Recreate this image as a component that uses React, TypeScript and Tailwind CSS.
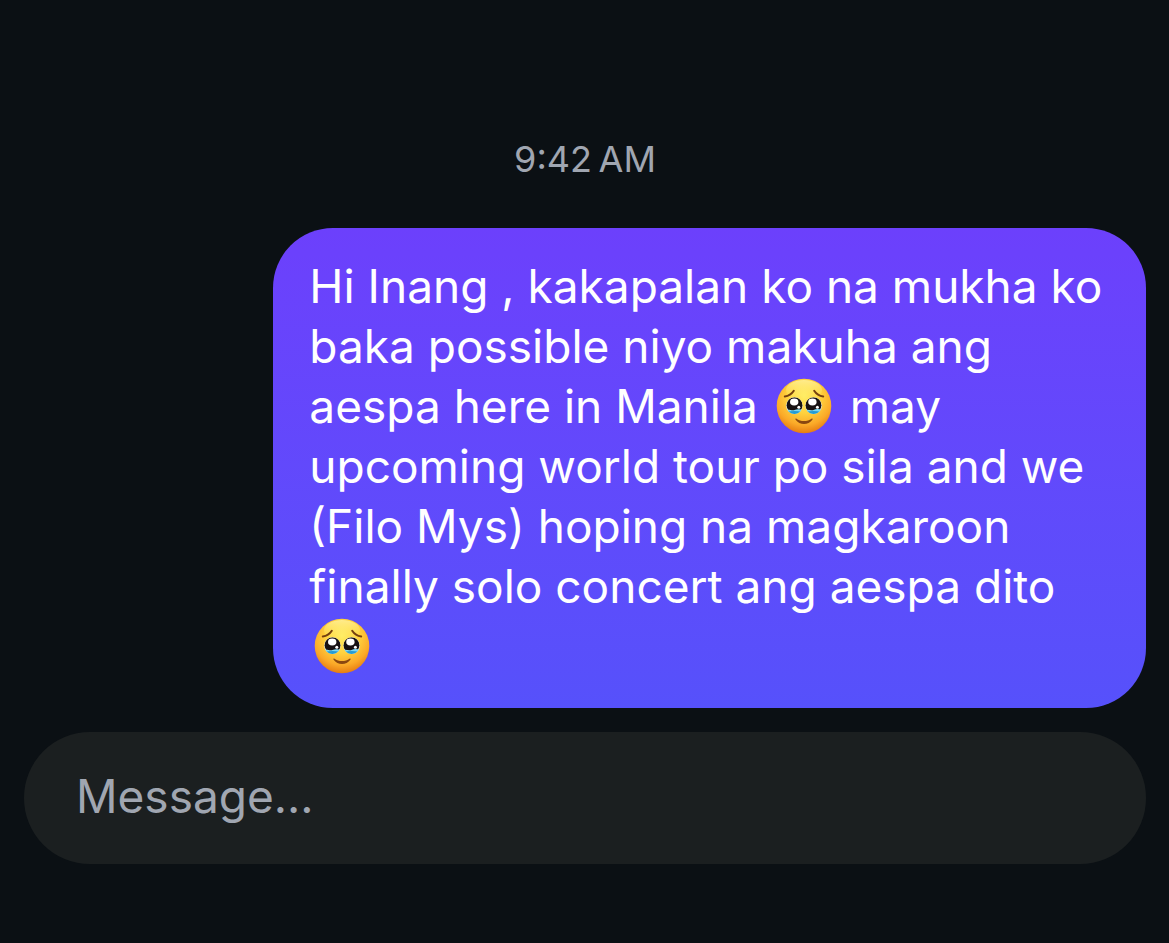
import { useId } from 'react'

function TearyEmoji() {
    const id = useId()
    const face = `${id}-face`
    const shine = `${id}-shine`
    const eye = `${id}-eye`
    return (
        <svg className="inline-block size-15 mx-[3px] -mt-3 -mb-1 align-middle" viewBox="0 0 60 60" role="img" aria-label="Face holding back tears">
            <defs>
                <radialGradient id={face} cx="0.5" cy="0.32" r="0.68">
                    <stop offset="0" stopColor="#ffec62" />
                    <stop offset="0.45" stopColor="#ffd23e" />
                    <stop offset="0.78" stopColor="#fba928" />
                    <stop offset="1" stopColor="#e67c12" />
                </radialGradient>
                <linearGradient id={shine} x1="0" y1="0" x2="0" y2="1">
                    <stop offset="0" stopColor="#fffcc0" stopOpacity="0.6" />
                    <stop offset="1" stopColor="#fff36b" stopOpacity="0" />
                </linearGradient>
                <clipPath id={eye}>
                    <circle cx="20.4" cy="29.6" r="8.3" />
                    <circle cx="39.6" cy="29.6" r="8.3" />
                </clipPath>
            </defs>
            <circle cx="30" cy="30" r="27.3" fill={`url(#${face})`} />
            <ellipse cx="30" cy="14" rx="18" ry="10" fill={`url(#${shine})`} />
            <path d="M10.8 20.4C14.8 20 17.6 18.2 19.8 14.8" fill="none" stroke="#75400f" strokeWidth="2" strokeLinecap="round" />
            <path d="M49.2 20.4C45.2 20 42.4 18.2 40.2 14.8" fill="none" stroke="#75400f" strokeWidth="2" strokeLinecap="round" />
            <g clipPath={`url(#${eye})`}>
                <path d="M12 21H48V38H12Z" fill="#dfe9ea" />
                <circle cx="20.6" cy="29.2" r="8" fill="#171113" />
                <circle cx="39.4" cy="29.2" r="8" fill="#171113" />
                <path d="M12 34C15 32.8 18 35 20.5 34C23 32.8 26 33 29.4 34V39H12Z" fill="#7ad8f5" />
                <path d="M30.6 34C34 33 37 35 39.5 34C42 32.8 45 32.8 48 34V39H30.6Z" fill="#7ad8f5" />
                <path d="M13 36C18 34.8 23 34.8 28 36V39H13ZM32 36C37 34.8 42 34.8 47 36V39H32Z" fill="#259bd3" />
            </g>
            <ellipse cx="20.2" cy="26" rx="4.2" ry="3.4" fill="#fff" />
            <ellipse cx="38.4" cy="26" rx="4.2" ry="3.4" fill="#fff" />
            <circle cx="24.8" cy="31.2" r="1.5" fill="#fff" />
            <circle cx="43.4" cy="31.2" r="1.5" fill="#fff" />
            <path d="M22.5 42.7C26.5 45.9 33.5 45.9 37.5 42.7C38.3 42.1 39 42.9 38.4 43.7C34.5 49.3 25.5 49.3 21.6 43.7C21 42.9 21.7 42.1 22.5 42.7Z" fill="#8a4710" />
        </svg>
    )
}

export default function App() {
    return (
        <main className="flex flex-col min-h-screen pl-6 pr-[23px] pt-[135px] bg-[#0b1014] font-['Inter',sans-serif]">
            <time className="mb-[45px] text-center text-[36px] leading-12 text-[#a0a6b1]">9:42{'\u2009'}AM</time>
            <div className="self-end w-7/9 px-9 pt-7 pb-8 mb-6 rounded-[60px] bg-linear-to-b from-[#6c40fc] to-[#5651fb] text-[46px] leading-[60px] text-white">
                <p>
                    Hi Inang , kakapalan ko na mukha ko baka possible niyo makuha ang aespa here in Manila <TearyEmoji /> may
                    upcoming world tour po sila and we (Filo Mys) hoping na magkaroon finally solo concert ang aespa dito{' '}
                    <TearyEmoji />
                </p>
            </div>
            <input
                type="text"
                aria-label="Message"
                placeholder="Message..."
                className="w-full h-33 px-[52px] pb-1 rounded-full bg-[#1b1f20] text-[46px] text-white placeholder:text-[#a0a6b1] outline-none"
            />
        </main>
    )
}
